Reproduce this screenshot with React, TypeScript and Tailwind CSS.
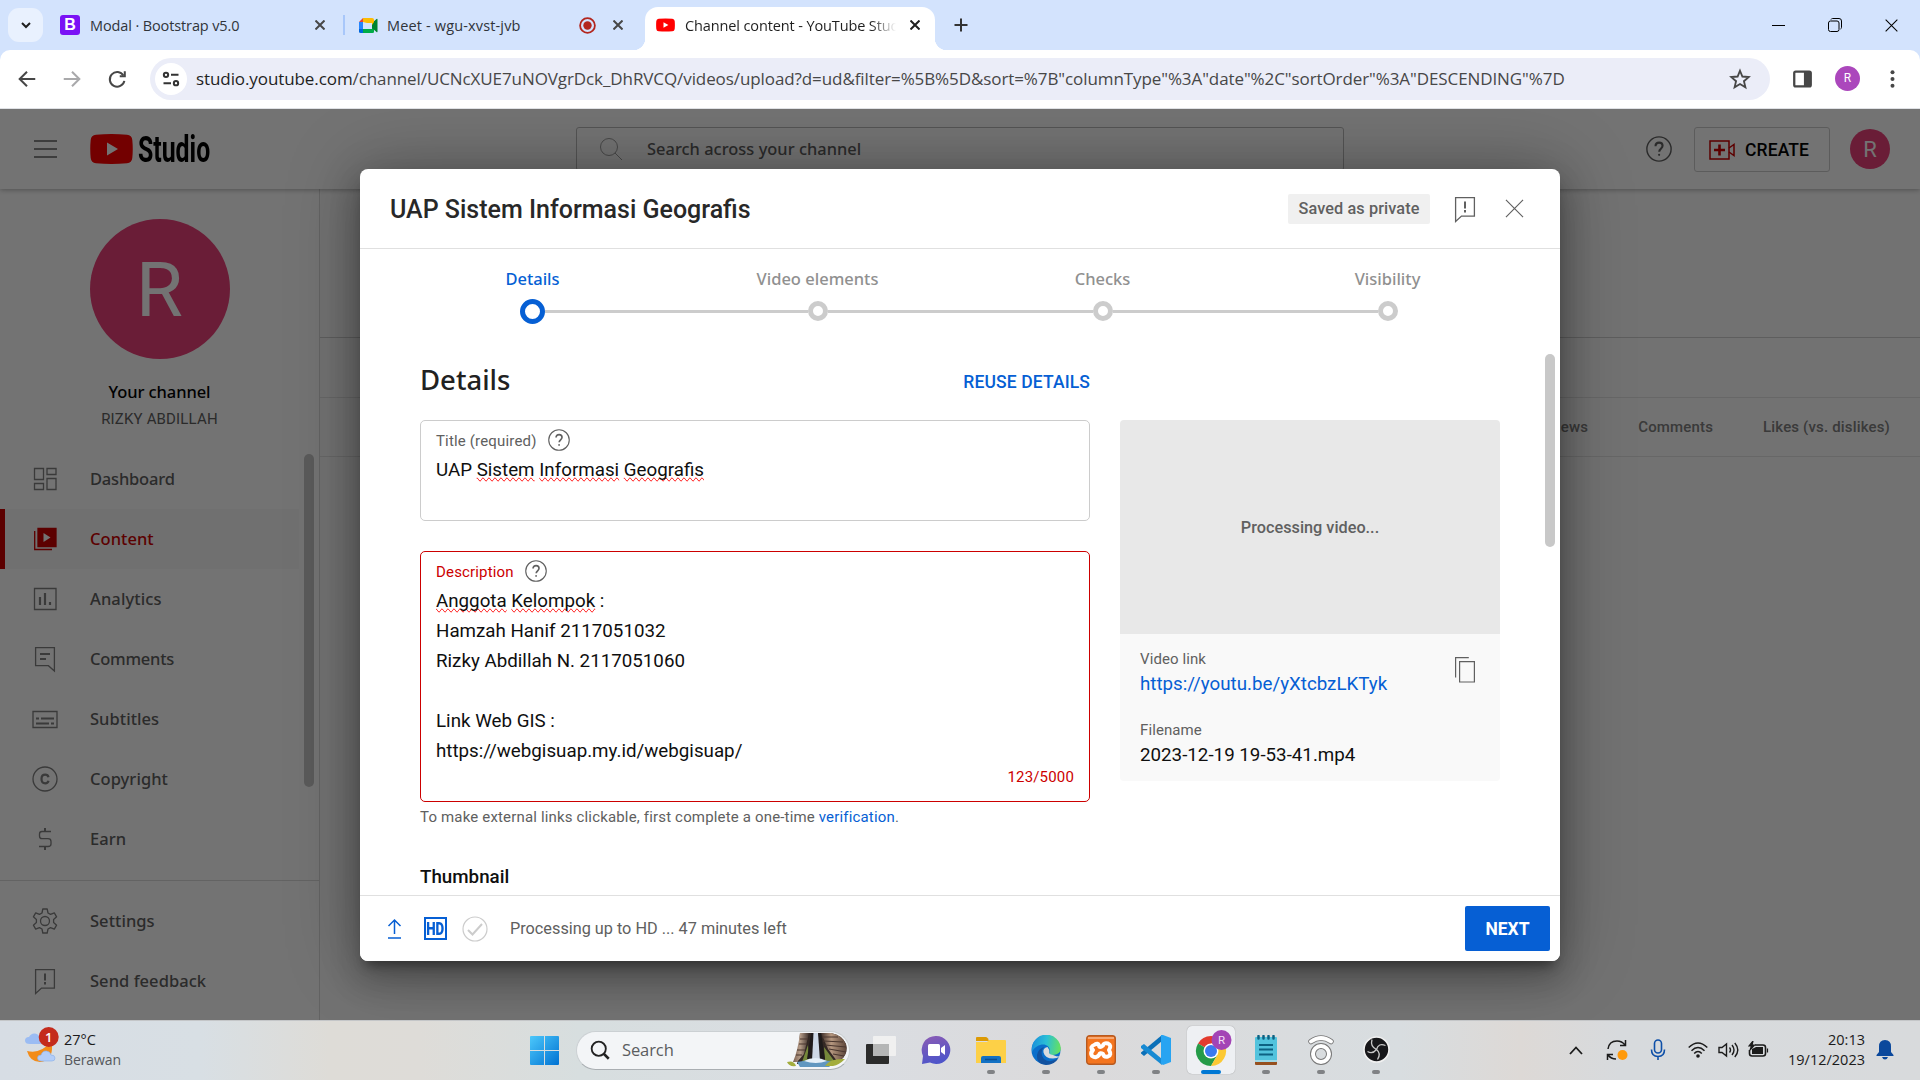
import React from "react";

const segoe = "font-['Open_Sans',sans-serif]";
const ytSans = "font-['Noto_Sans',sans-serif] font-medium";

type P = { className?: string; children?: React.ReactNode };

function Line({ size = 24, w = 1, className = "", children }: P & { size?: number; w?: number }) {
  return (
    <svg width={size} height={size} viewBox="0 0 24 24" fill="none" stroke="currentColor" strokeWidth={w} className={`shrink-0 ${className}`}>
      {children}
    </svg>
  );
}

const Cross = ({ size = 10, w = 2, className = "" }: { size?: number; w?: number; className?: string }) => (
  <svg width={size} height={size} viewBox="0 0 10 10" stroke="currentColor" strokeWidth={w} className={`shrink-0 ${className}`}>
    <path d="M.5.5l9 9M9.5.5l-9 9" />
  </svg>
);

const Help = ({ size, w = 1 }: { size: number; w?: number }) => (
  <Line size={size} w={w}>
    <circle cx="12" cy="12" r="11.2" />
    <path d="M8.8 9.4c0-2 1.3-3.3 3.3-3.3s3.200 1.200 3.200 3c0 2.600-3.100 2.800-3.100 5.400" strokeWidth={w * 1.5} />
    <circle cx="12.100" cy="17.400" r="1" fill="currentColor" stroke="none" />
  </Line>
);

const FeedbackIcon = () => (
  <svg width="30" height="30" viewBox="0 0 30 30" fill="none" stroke="currentColor" strokeWidth="1.3" className="shrink-0">
    <path d="M5.600 3.600h18.800v18.500H11.500L5.600 27.500z" />
    <path d="M15 7.500v7M15 16v2.500" strokeWidth="2" />
  </svg>
);

const YouTubeBadge = ({ w, h }: { w: number; h: number }) => (
  <svg width={w} height={h} viewBox="0 0 43 30" className="shrink-0">
    <path d="M6 .8Q21.500-.6 37 .8q4.800.4 5.300 5.200.9 9 0 18-.5 4.800-5.300 5.200-15.500 1.400-31 0Q1.200 28.800.7 24q-.9-9 0-18Q1.200 1.200 6 .8z" fill="#f00" />
    <path d="M17 8.600v12.800L28 15z" fill="#fff" />
  </svg>
);

function TabStrip() {
  return (
    <div className={`h-[50px] flex bg-[#d3e3fd] text-[#1f1f1f] text-[14.500px] ${segoe}`}>
      <div className="w-[35px] h-[34px] mt-2 ml-2 rounded-[11px] bg-[#e9f1fe] flex items-center justify-center">
        <svg width="10" height="7" viewBox="0 0 10 7" fill="none" stroke="#1f1f1f" strokeWidth="2"><path d="M1 1l4 4 4-4" /></svg>
      </div>
      <div className="ml-[17px] w-[283px] flex items-center">
        <div className="w-5 h-5 rounded-[3px] bg-[#7a12f5] text-white font-bold font-['Liberation_Sans',sans-serif] text-[16px] leading-5 text-center">B</div>
        <span className="ml-[10px] grow whitespace-nowrap tracking-[-0.120px] text-[#30343a] pt-px">Modal · Bootstrap v5.0</span>
        <Cross className="mr-[18px] text-[#474747]" />
      </div>
      <div className="w-[2px] h-5 mt-[15px] bg-[#a8c7fa]" />
      <div className="w-[300px] pl-[13px] flex items-center">
        <svg width="20" height="17" viewBox="0 0 20 17">
          <path d="M5 1h9v5h-5l-4-1z" fill="#fbbc04" />
          <path d="M1 5l4-4v4z" fill="#ea4335" />
          <path d="M1 5h4v7H1z" fill="#2684fc" />
          <path d="M1 12h4v4H2.500Q1 16 1 14.500z" fill="#0066da" />
          <path d="M5 12h9V9l2 2v4q0 1-1.500 1H5z" fill="#00ac47" />
          <path d="M14 6l4.500-4q1-.6 1 .5v12q0 1-1 .4l-4.500-4z" fill="#00832d" />
          <path d="M14 1q2 0 2 1.500V5l-2 3z" fill="#ffba00" />
        </svg>
        <span className="ml-[9px] grow whitespace-nowrap tracking-[0.150px] text-[#30343a] pt-px">Meet - wgu-xvst-jvb</span>
        <svg width="17" height="17" viewBox="0 0 17 17"><circle cx="8.500" cy="8.500" r="7.400" fill="none" stroke="#b3261e" strokeWidth="1.800" /><circle cx="8.500" cy="8.500" r="4.200" fill="#b3261e" /></svg>
        <Cross className="ml-[17px] mr-[22px] text-[#474747]" />
      </div>
      <div className="w-[290px] mt-[7px] rounded-t-[13px] bg-white pl-[11px] flex items-center pb-[7px] relative">
        <div className="absolute -left-3 bottom-0 w-3 h-3 bg-[radial-gradient(circle_at_0_0,transparent_12px,white_12.500px)]" />
        <div className="absolute -right-3 bottom-0 w-3 h-3 bg-[radial-gradient(circle_at_12px_0,transparent_12px,white_12.500px)]" />
        <YouTubeBadge w={19} h={14} />
        <span className="ml-[10px] w-[211px] overflow-hidden whitespace-nowrap tracking-[-0.120px] pt-px [mask-image:linear-gradient(to_right,black_88%,transparent)]">Channel content - YouTube Studio</span>
        <Cross className="ml-[14px]" />
      </div>
      <div className="ml-[19px] flex items-center grow">
        <svg width="14" height="14" viewBox="0 0 14 14" stroke="#333" strokeWidth="2"><path d="M7 .5v13M.5 7h13" /></svg>
      </div>
      <div className="flex items-center gap-[43px] pr-[22px]">
        <div className="w-[13px] h-px bg-black" />
        <svg width="14" height="14" viewBox="0 0 14 14" fill="none" stroke="#000"><rect x=".5" y="3" width="10.500" height="10.500" rx="2" /><path d="M3 1.500q.5-1 1.500-1H11q2.500 0 2.500 2.500v6.500q0 1-1 1.500" /></svg>
        <Cross size={13} w={0.8} className="text-black" />
      </div>
    </div>
  );
}

function AddressBar() {
  return (
    <div className="h-[59px] bg-[#d3e3fd]">
      <div className="h-full rounded-t-[10px] bg-white flex items-center pb-px border-b border-[#dfe1e5] text-[#474747]">
        <div className="w-[150px] pl-[16px] flex items-center gap-[23px] shrink-0">
          <Line size={22} w={2.200}><path d="M21 12H4.500M12 4l-8 8 8 8" /></Line>
          <Line size={22} w={2.200} className="text-[#a9a9ab]"><path d="M3 12h16.500M12 4l8 8-8 8" /></Line>
          <Line size={22} w={2.200}><path d="M19 8.200A8 8 0 1 0 20 14" /><path d="M20.500 3.500V9H15" /></Line>
        </div>
        <div className="w-[1620px] h-[42px] rounded-full bg-[#ebedf8] flex items-center pl-[5px] pr-[19px] shrink-0">
          <div className="w-8 h-8 rounded-full bg-white flex items-center justify-center">
            <Line size={20} w={2.400} className="text-[#333]"><circle cx="6" cy="7" r="2.600" /><path d="M12 7h9M3 17h9" /><circle cx="18" cy="17" r="2.600" /></Line>
          </div>
          <span className={`ml-[9px] grow text-[17px] pt-px whitespace-nowrap tracking-[-0.090px] text-[#474747] ${segoe}`}>
            <span className="text-[#1f1f1f]">studio.youtube.com</span>/channel/UCNcXUE7uNOVgrDck_DhRVCQ/videos/upload?d=ud&amp;filter=%5B%5D&amp;sort=%7B"columnType"%3A"date"%2C"sortOrder"%3A"DESCENDING"%7D
          </span>
          <Line size={22} w={2}><path d="M12 3l2.600 6.300 6.900.6-5.200 4.500 1.600 6.700-5.900-3.600-5.900 3.600 1.600-6.700L2.500 9.900l6.900-.6z" /></Line>
        </div>
        <svg width="19" height="18" viewBox="0 0 20 18" className="ml-[23px]"><rect x="1.300" y="1.300" width="17.400" height="15.400" rx="1.500" fill="none" stroke="#474747" strokeWidth="2.400" /><path d="M11.500 1h7v16h-7z" fill="#474747" /></svg>
        <div className="ml-[23px] w-[25px] h-[25px] rounded-full bg-[#ab47bc] text-white text-[12px] leading-[25px] text-center">R</div>
        <svg width="5" height="18" viewBox="0 0 5 18" fill="#474747" className="ml-[30px]"><circle cx="2.500" cy="2.200" r="2" /><circle cx="2.500" cy="9" r="2" /><circle cx="2.500" cy="15.800" r="2" /></svg>
      </div>
    </div>
  );
}

function StudioHeader() {
  return (
    <div className="h-20 shrink-0 flex items-start bg-white shadow-[0_1px_5px_rgba(0,0,0,.3)] relative text-[#606060]">
      <svg width="23" height="18" viewBox="0 0 23 18" stroke="currentColor" strokeWidth="1.300" className="ml-[34px] mt-[31px]"><path d="M0 1h23M0 9h23M0 17h23" /></svg>
      <div className="ml-[33px] mt-[25px]"><YouTubeBadge w={43} h={30} /></div>
      <div className="ml-[5px] w-[438px] mt-[20px] h-[42px]">
        <span className="inline-block origin-left scale-x-[0.690] text-[36px] leading-[42px] font-bold text-black">Studio</span>
      </div>
      <div className="w-[768px] h-[44px] mt-[18px] border border-[#bbb] rounded-[3px] flex items-center pl-[22px] text-[#a0a0a0]">
        <Line size={24}><circle cx="10" cy="10" r="8.500" /><path d="M16 16l7 7" /></Line>
        <span className={`ml-[24px] text-[16.400px] tracking-[0.030px] text-[#606060] ${ytSans}`}>Search across your channel</span>
      </div>
      <div className="ml-[302px] mt-[27px]"><Help size={26} w={1.300} /></div>
      <div className="ml-[22px] mt-[18px] w-[136px] h-[45px] border border-[#ccc] rounded-[3px] flex items-center pl-[14px]">
        <svg width="27" height="20" viewBox="0 0 27 20" fill="none" stroke="#c00" strokeWidth="1.500"><path d="M1 1h19v18H1z" /><path d="M20 8l5-3.500v11L20 12" /><path d="M10.500 4.500v11M5 10h11" strokeWidth="2.600" /></svg>
        <span className="ml-[9px] pt-[2px] text-[17.500px] tracking-[0.120px] font-medium text-[#030303]">CREATE</span>
      </div>
      <div className="ml-[20px] mt-[20px] w-10 h-10 rounded-full bg-[#ec407a] text-white text-[22px] leading-[41px] text-center">R</div>
    </div>
  );
}

const icons: Record<string, React.ReactNode> = {
  Dashboard: <g><path d="M4.500 4.500h9v11h-9zM17 4.500h9v6h-9zM4.500 19.500h9v6h-9zM17 14.500h9v11h-9z" /></g>,
  Content: <g stroke="#c00"><path d="M8 4.500h18v18H8z" fill="#c00" /><path d="M4.700 7v18.500H22" /><path d="M13.500 9v9l7-4.500z" fill="#fff" stroke="none" /></g>,
  Analytics: <g><path d="M4.500 4.500h21.500v21H4.500z" /><path d="M10 13v8M15 9v12M20 18v3" strokeWidth="2.200" /></g>,
  Comments: <g><path d="M5.600 3.600h18.800V27l-6-5.300H5.600z" /><path d="M10 10h10M10 15h6" strokeWidth="2" /></g>,
  Subtitles: <g><path d="M3 7.500h24v16H3z" /><path d="M6 14.500h3M11 14.500h13M6 19.500h13M21 19.500h3" strokeWidth="2" /></g>,
  Copyright: <g><circle cx="15" cy="15" r="12" /><path d="M18.500 13.200q-.5-2.500-3.300-2.500-3.700 0-3.700 4.300t3.700 4.300q2.800 0 3.300-2.600" strokeWidth="2.200" /></g>,
  Earn: <g><path d="M21 7.500h-9q-2.500 0-2.500 2.500v2q0 2.700 2.500 2.700h6q3 0 3 2.800v2.500q0 2.500-3 2.500H9" /><path d="M15 4v3.500M15 22.500V26" strokeWidth="2" /></g>,
  Settings: (
    <g>
      <circle cx="15" cy="15" r="4.500" />
      <path d="M12.800 3h4.400l.8 4 2.500 1.400 3.800-1.500 2.300 3.900-3 2.600v3.200l3 2.600-2.300 3.900-3.800-1.500-2.500 1.400-.8 4h-4.400l-.8-4-2.500-1.400-3.800 1.500-2.300-3.900 3-2.600v-3.200l-3-2.600 2.300-3.900 3.800 1.500L12 7z" strokeLinejoin="round" />
    </g>
  ),
  "Send feedback": <g><path d="M5.600 3.600h18.800v18.500H11.500L5.600 27.500z" /><path d="M15 7.500v7M15 16v2.500" strokeWidth="2" /></g>,
};

function NavItem({ name, active = false, tracking = "tracking-[0.050px]" }: { name: string; active?: boolean; tracking?: string }) {
  return (
    <div className={`h-[60px] flex items-center ${active ? "w-[299px] bg-[#f8f8f8] border-l-[5px] border-[#c00] pl-[25px] text-[#c00]" : "pl-[30px] text-[#606060]"}`}>
      <svg width="30" height="30" viewBox="0 0 30 30" fill="none" stroke="currentColor" strokeWidth="1.300" className="text-[#808080]">{icons[name]}</svg>
      <span className={`ml-[30px] text-[16.500px] ${tracking} ${ytSans}`}>{name}</span>
    </div>
  );
}

function Sidebar() {
  return (
    <div className="w-[320px] shrink-0 bg-white border-r border-[#dcdcdc] flex flex-col">
      <div className="h-[260px] pt-[30px] flex flex-col items-center">
        <div className="w-[140px] h-[140px] rounded-full bg-[#ec407a] text-white text-[76px] leading-[142px] text-center">R</div>
        <div className={`mt-[20px] text-[16.500px] leading-[26px] tracking-[-0.100px] text-[#030303] ${ytSans}`}>Your channel</div>
        <div className="mt-[4px] text-[15px] leading-[20px] tracking-[0.165px] text-[#606060]">RIZKY ABDILLAH</div>
      </div>
      <div className="flex h-[431px]">
        <div className="w-[304px]">
          <NavItem name="Dashboard" tracking="tracking-[-0.200px]" />
          <NavItem name="Content" active />
          <NavItem name="Analytics" tracking="tracking-[0.100px]" />
          <NavItem name="Comments" tracking="tracking-[-0.250px]" />
          <NavItem name="Subtitles" />
          <NavItem name="Copyright" />
          <NavItem name="Earn" />
        </div>
        <div className="mt-[5px] w-[10px] h-[333px] rounded-full bg-[#c8c8c8]" />
      </div>
      <div className="h-px bg-[#dcdcdc]" />
      <div className="mt-[10px]">
        <NavItem name="Settings" />
        <NavItem name="Send feedback" />
      </div>
    </div>
  );
}

function ContentTable() {
  return (
    <div className="grow bg-[#fdfdfd] pt-[148px] text-[15px] tracking-[0.165px] font-medium text-[#808080]">
      <div className="h-[60px] border-t border-[#d0d0d0]" />
      <div className="h-[60px] border-y border-[#e5e5e5] flex items-center justify-end gap-[50px] pr-[30px]">
        <span>Views</span>
        <span>Comments</span>
        <span>Likes (vs. dislikes)</span>
      </div>
    </div>
  );
}

const Sp = ({ children }: P) => <span className="[text-decoration-line:spelling-error]">{children}</span>;

function Stepper() {
  const steps = ["Details", "Video elements", "Checks", "Visibility"];
  return (
    <div className="h-[105px] shrink-0 px-[30px] pt-[17px] grid grid-cols-4">
      {steps.map((s, i) => (
        <div key={s} className="flex flex-col items-center">
          <div className={`h-[25px] leading-[25px] text-[16.500px] ${ytSans} ${i === 0 ? "text-[#065fd4]" : "text-[#909090]"}`}>{s}</div>
          <div className="mt-[7px] w-full h-[26px] flex items-center">
            <div className={`h-[3px] grow ${i === 0 ? "bg-transparent" : "bg-[#ccc]"}`} />
            {i === 0 ? (
              <div className="w-[25px] h-[25px] rounded-full border-[5px] border-[#065fd4]" />
            ) : (
              <div className="w-5 h-5 rounded-full border-[5px] border-[#ccc]" />
            )}
            <div className={`h-[3px] grow ${i === 3 ? "bg-transparent" : "bg-[#ccc]"}`} />
          </div>
        </div>
      ))}
    </div>
  );
}

function UploadDialog() {
  return (
    <div className="absolute left-[360px] top-[169px] w-[1200px] h-[792px] rounded-[8px] bg-white flex flex-col overflow-hidden text-[#0f0f0f]">
      <div className="h-20 shrink-0 border-b border-[#e0e0e0] flex items-center pl-[30px] pr-[36px] text-[#606060]">
        <span className="grow text-[25px] pt-[2px] font-medium text-[#282828]">UAP Sistem Informasi Geografis</span>
        <span className="w-[142px] h-[30px] bg-[#f0f0f0] rounded-[2px] text-center leading-[30px] text-[16.250px] tracking-[0.110px] font-medium">Saved as private</span>
        <div className="ml-[20px]"><FeedbackIcon /></div>
        <Cross size={19} w={0.6} className="ml-[25px]" />
      </div>
      <Stepper />
      <div className="h-[541px] flex overflow-hidden">
        <div className="ml-[60px] w-[670px]">
          <div className="h-[66px] pt-[8px] flex items-start justify-between">
            <span className={`text-[27.500px] leading-[40px] -mt-[2px] text-[#212121] ${ytSans}`}>Details</span>
            <span className="text-[17.500px] leading-[40px] tracking-[0.120px] font-medium text-[#065fd4]">REUSE DETAILS</span>
          </div>
          <div className="h-[101px] border border-[#ccc] rounded-[5px] px-[15px] pt-[6px]">
            <div className="h-[25px] flex items-center gap-[11px] text-[15px] tracking-[0.165px] text-[#606060]"><span className="pt-[3px]">Title (required)</span><Help size={22} w={1.200} /></div>
            <div className="mt-[3px] text-[18.750px] leading-[30px]">UAP <Sp>Sistem</Sp> <Sp>Informasi</Sp> <Sp>Geografis</Sp></div>
          </div>
          <div className="mt-[30px] h-[251px] border border-[#c00] rounded-[5px] px-[15px] pt-[6px]">
            <div className="h-[25px] flex items-center gap-[11px] text-[15px] tracking-[0.165px] text-[#c00]"><span className="pt-[3px]">Description</span><span className="text-[#606060]"><Help size={22} w={1.200} /></span></div>
            <div className="mt-[3px] text-[18.750px] leading-[30px] whitespace-pre-line h-[180px]">
              <Sp>Anggota</Sp> <Sp>Kelompok</Sp> :{"\nHamzah Hanif 2117051032\nRizky Abdillah N. 2117051060\n\nLink Web GIS :\nhttps://webgisuap.my.id/webgisuap/"}
            </div>
            <div className="text-right text-[15px] leading-[22px] tracking-[0.165px] text-[#c00]">123/5000</div>
          </div>
          <div className="mt-[4px] text-[15px] leading-[22px] tracking-[0.165px] text-[#606060]">To make external links clickable, first complete a one-time <span className="text-[#065fd4]">verification</span>.</div>
          <div className="mt-[34px] text-[18.750px] leading-[30px] font-medium">Thumbnail</div>
        </div>
        <div className="ml-[30px] mt-[66px] w-[380px]">
          <div className="h-[214px] rounded-t-[4px] bg-[#e8e8e8] flex items-center justify-center pt-[2px] text-[16.250px] font-medium text-[#606060]">Processing video...</div>
          <div className="h-[147px] rounded-b-[4px] bg-[#f9f9f9] flex pl-5 pr-[25px]">
            <div className="grow pt-[14px]">
              <div className="text-[15px] leading-[22px] tracking-[0.100px] text-[#606060]">Video link</div>
              <div className="text-[18.750px] leading-[28px] text-[#065fd4]">https://youtu.be/yXtcbzLKTyk</div>
              <div className="mt-[21px] text-[15px] leading-[22px] tracking-[0.100px] text-[#606060]">Filename</div>
              <div className="text-[18.750px] leading-[28px]">2023-12-19 19-53-41.mp4</div>
            </div>
            <svg width="20" height="26" viewBox="0 0 20 26" fill="none" stroke="#606060" strokeWidth="1.200" className="mt-[23px]"><path d="M.6 20.500V.6h13.200M4.600 4.600h14.800v20.400H4.600z" /></svg>
          </div>
        </div>
        <div className="ml-[45px] w-[10px] h-[193px] rounded-full bg-[#c8c8c8]" />
      </div>
      <div className="h-[66px] bg-white shrink-0 border-t border-[#e0e0e0] flex items-center pl-[27px] pr-[10px] relative">
        <svg width="16" height="22" viewBox="0 0 16 22" fill="none" stroke="#065fd4" strokeWidth="1.500"><path d="M7.500 16V2.500M1.500 8l6-6 6 6M1 20h13" /></svg>
        <div className="ml-[21px] w-[23px] h-[23px] border-2 border-[#065fd4] flex items-center justify-center">
          <span className="inline-block scale-x-[0.740] text-[18px] leading-none font-black pt-px text-[#065fd4]">HD</span>
        </div>
        <svg width="26" height="26" viewBox="0 0 26 26" fill="none" stroke="#ccc" className="ml-[15px]"><circle cx="13" cy="13" r="12" strokeWidth="1.200" /><path d="M6 14l4.500 4.500L20 8" strokeWidth="2" /></svg>
        <span className="ml-[22px] pt-[2px] grow text-[16.250px] text-[#606060]">Processing up to HD ... 47 minutes left</span>
        <div className="w-[85px] h-[45px] rounded-[2px] bg-[#065fd4] text-white text-center leading-[47px] text-[17.500px] font-bold">NEXT</div>
      </div>
    </div>
  );
}

function TaskIcon({ children, running = true, active = false }: P & { running?: boolean; active?: boolean }) {
  return (
    <div className="w-[55px] h-[58px] flex items-center justify-center relative">
      {active && <div className="absolute inset-x-[3.500px] top-[5px] bottom-[5px] rounded-[5px] bg-[#eef0f3] shadow-[0_0_1px_#888]" />}
      <div className="relative flex">{children}</div>
      {running && <div className={`absolute bottom-[5px] h-1 rounded-full ${active ? "w-5 bg-[#0078d4]" : "w-2 bg-[#808285]"}`} />}
    </div>
  );
}

function Taskbar() {
  return (
    <div className={`h-[60px] flex items-center pb-px border-t border-[#c4c6c8] text-[#1b1b1b] bg-[linear-gradient(90deg,#d7dde4_0px,#d8dfe4_200px,#dedcd7_330px,#dedcd8_420px,#d7dedf_580px,#dadde2_850px,#dbdadb_1080px,#d8dde0_1400px,#ddd9d6_1520px,#d7dadd_1620px,#d8dadc_1920px)] ${segoe}`}>
      <div className="w-[530px] pl-[24px] flex items-center shrink-0">
        <svg width="36" height="38" viewBox="0 0 36 38" className="-mt-[10px]">
          <path d="M3 25q14 3 22-8l3 2q1 16-12 17-10 0-13-11z" fill="#f28c1a" />
          <path d="M6 18q-5 0-5-3.500T5 11q2-4 6-3.500t5 4.500q3 0 3 3t-3 3z" fill="#9bbcf3" />
          <path d="M17 35q-3.500 0-3.500-3t3.500-3q1.500-4.500 5.500-4T27 29q4 0 4 3t-3 3z" fill="#b3cdf8" stroke="#87aeea" strokeWidth=".6" />
          <circle cx="24.700" cy="11" r="10" fill="#c42b1c" />
          <text x="24.700" y="15.500" fill="#fff" fontSize="13" fontWeight="600" textAnchor="middle">1</text>
        </svg>
        <div className="ml-1 leading-[20px]">
          <div className="text-[14.500px]">27°C</div>
          <div className="text-[14px] tracking-[-0.100px] text-[#55585c]">Berawan</div>
        </div>
      </div>
      <svg width="29" height="29" viewBox="0 0 29 29">
        <defs><linearGradient id="win" x1="0" y1="0" x2="1" y2="1"><stop offset="0" stopColor="#4cc8fb" /><stop offset="1" stopColor="#0072d2" /></linearGradient></defs>
        <path d="M1 0h13v14H0V1Q0 0 1 0zM15 0h13q1 0 1 1v13H15zM0 15h14v14H1q-1 0-1-1zM15 15h14v13q0 1-1 1H15z" fill="url(#win)" />
      </svg>
      <div className="ml-[17px] w-[274px] h-[39px] rounded-full bg-[#f3f5f7] border border-[#cbd0d3] border-b-[#a9aeb2] flex items-center pl-[13px] overflow-hidden">
        <Line size={20} w={2.200} className="text-[#222]"><circle cx="10.500" cy="10.500" r="8.500" /><path d="M16.500 16.500l6 6" strokeWidth="3" /></Line>
        <span className="ml-[12px] w-[165px] text-[16.500px] tracking-[-0.100px] text-[#5b5d60]">Search</span>
        <svg width="61" height="34" viewBox="0 0 61 34">
          <defs>
            <linearGradient id="rockL" x1="0" y1="0" x2="1" y2="0"><stop offset="0" stopColor="#7b6152" /><stop offset=".45" stopColor="#b59c88" /><stop offset="1" stopColor="#3d302b" /></linearGradient>
            <linearGradient id="rockR" x1="0" y1="0" x2="1" y2="0"><stop offset="0" stopColor="#3d2f2a" /><stop offset=".4" stopColor="#b5977f" /><stop offset="1" stopColor="#5b4438" /></linearGradient>
          </defs>
          <path d="M13 0h31q11 2 15 11 2 8-3 14l-8 6H10Q12 12 13 0z" fill="#332824" />
          <path d="M13 0h9l-5 21-7 8H6q5-12 7-29z" fill="url(#rockL)" />
          <path d="M34 0h10q11 2 15 11 2 8-3 14l-6 3-9-12z" fill="url(#rockR)" />
          <path d="M35 4l16 0M36 8l20 1M38 12l21 2M42 16l17 3M46 21l11 2M13 6h8M12 11h8M10 17h8M9 22h6" stroke="#4a372f" strokeWidth="1.100" />
          <path d="M21 12l-6 17h7zM37 14l11 15H38z" fill="#75883a" />
          <path d="M24 0h10l4 26H20z" fill="#1f1b1b" />
          <path d="M26.500 0h4.500l2 28h-8z" fill="#cdd8e6" />
          <path d="M10 29q18-4 38 0l-6 5H13z" fill="#6197c0" />
          <path d="M17 28q11-6 23 0-11 4-23 0z" fill="#e4eff8" />
          <path d="M0 29q7-2 9 4-7 1-9-4zM38 33q5-8 20-7-6 6-12 7z" fill="#a3ad3d" />
        </svg>
      </div>
      <div className="ml-[3.500px] flex items-center">
        <TaskIcon running={false}>
          <svg width="30" height="28" viewBox="0 0 30 28"><rect x="0" y="8" width="23" height="20" rx="1" fill="#2c2c2b" /><rect x="7" y="0" width="23" height="20" rx="1" fill="#f0f0f0" /><path d="M7 8h16v12H7z" fill="#b5b6b6" /></svg>
        </TaskIcon>
        <TaskIcon running={false}>
          <svg width="30" height="30" viewBox="0 0 30 30"><defs><linearGradient id="chat" x1="0" y1="0" x2="0.300" y2="1"><stop offset="0" stopColor="#8d5cb4" /><stop offset="1" stopColor="#4f55c9" /></linearGradient></defs><path d="M15 1a14 14 0 1 1-6 26.500L1 29l1-8A14 14 0 0 1 15 1z" fill="url(#chat)" /><rect x="7" y="9" width="12" height="12" rx="1.500" fill="#fff" /><path d="M20 13l4-3v10l-4-3z" fill="#fff" /></svg>
        </TaskIcon>
        <TaskIcon>
          <svg width="30" height="28" viewBox="0 0 30 28"><path d="M0 2q0-1 1-1h9q1 0 2 1.500L13 5H0z" fill="#dc9a05" /><path d="M0 6h11l2-2h16q1 0 1 1v22H0z" fill="#fdd047" /><path d="M5 27v-5q0-2 2-2h16q2 0 2 2v5z" fill="#1371c4" /><path d="M9 23.500h12" stroke="#0b4d91" strokeWidth="1.500" /></svg>
        </TaskIcon>
        <TaskIcon>
          <svg width="30" height="30" viewBox="0 0 30 30">
            <defs><linearGradient id="edge" x1="0" y1=".3" x2="1" y2=".4"><stop offset="0" stopColor="#1a8fdc" /><stop offset=".5" stopColor="#2bbfd6" /><stop offset="1" stopColor="#65e160" /></linearGradient></defs>
            <circle cx="15" cy="15" r="14.500" fill="#0b6fcb" />
            <path d="M1 12A14.500 14.500 0 0 1 29.800 13c.2 5-4 7-8 7-3 0-4-1-3.500-2 2-5-2-8.500-6-8.500S3 12 1 17z" fill="url(#edge)" />
            <path d="M13 12q-5 6 0 12 6 5 14.500-1-4 7-12.500 7-10-1-9-10 1-6 7-8z" fill="#1252a0" />
            <path d="M16.500 12q-5 1-4 5.500 1.500 6 9.500 6 4 0 6.500-2-3 0-6.500-1.500-5-1-3.700-3 .5-2-1.800-5z" fill="#d9dbde" />
          </svg>
        </TaskIcon>
        <TaskIcon>
          <svg width="30" height="30" viewBox="0 0 30 30"><rect x=".7" y=".7" width="28.600" height="28.600" rx="3" fill="#f4751f" stroke="#b85a20" strokeWidth="1.400" /><path d="M2 3h26" stroke="#f7a873" strokeWidth="2" /><path d="M9 9.500q3-2 4 1 .5 3 4 0 .5-3 5-2 4 2 1 6.500 3 5-1 6.500-4 1-5-2.500-3-2-4 1-3 4-7 1-2-3 1-6-4-3 2-5.500z" fill="none" stroke="#fff" strokeWidth="4" strokeLinejoin="round" /></svg>
        </TaskIcon>
        <TaskIcon>
          <svg width="30" height="30" viewBox="0 0 30 30"><path d="M21 6L3 21l-3-2.500v-1L21 0z" fill="#0b70b8" /><path d="M21 24L3 9 0 11v2l21 17z" fill="#178ad3" /><path d="M20 0l2 0 8 3v24l-8 3-2-1.500z" fill="#27a4f2" /></svg>
        </TaskIcon>
        <TaskIcon active>
          <svg width="38" height="38" viewBox="0 0 38 38" className="ml-[3px] -mt-[7px]">
            <path d="M17 23L4 15.500A15 15 0 0 1 30 15.500H17z" fill="#e33b2e" />
            <path d="M17 23l6.500 3.800L17 38A15 15 0 0 1 4 15.500z" fill="#259b48" />
            <path d="M17 15.500h13A15 15 0 0 1 17 38l6.500-11.200z" fill="#fcc934" />
            <circle cx="17" cy="23" r="7.500" fill="#fff" /><circle cx="17" cy="23" r="6" fill="#3a7af0" />
            <circle cx="27.500" cy="12" r="10" fill="#a344b5" />
            <text x="27.500" y="16" textAnchor="middle" fill="#f3dff6" fontSize="11.500" fontFamily="Roboto">R</text>
          </svg>
        </TaskIcon>
        <TaskIcon>
          <svg width="22" height="30" viewBox="0 0 22 30"><rect y="26" width="22" height="4" rx="1" fill="#96501f" /><rect y="2" width="22" height="25" rx="1" fill="#52c3dd" /><path d="M0 26h22" stroke="#eee" /><path d="M4 10h14M4 14.500h14M4 19.500h14" stroke="#0d6283" strokeWidth="2" /><path d="M3.500 1v2.500M8.500 1v2.500M13.500 1v2.500M18.500 1v2.500" stroke="#0d6283" strokeWidth="2.500" strokeLinecap="round" /></svg>
        </TaskIcon>
        <TaskIcon>
          <svg width="26" height="30" viewBox="0 0 26 30" fill="none"><circle cx="13" cy="19" r="8" stroke="#777" strokeWidth="6" /><circle cx="13" cy="19" r="8" stroke="#fff" strokeWidth="4" /><path d="M3 6.500q10-7 20 0" stroke="#777" strokeWidth="5.500" strokeLinecap="round" /><path d="M3 6.500q10-7 20 0" stroke="#fff" strokeWidth="3.800" strokeLinecap="round" /></svg>
        </TaskIcon>
        <TaskIcon>
          <svg width="27" height="27" viewBox="0 0 27 27" fill="none" stroke="#c8c8c8" strokeWidth="1.300" className="-mt-px"><circle cx="13.500" cy="13.500" r="12.500" fill="#17171a" stroke="#f1f1f1" strokeWidth="1.600" /><path d="M9 3.500q-2 7 4.500 10M13.500 13.500q2-7 9-4M13.500 13.500q5 4 1 10M13.500 13.500q-4 5-9 2" /></svg>
        </TaskIcon>
      </div>
      <div className="grow" />
      <div className="flex items-center shrink-0 pr-[26px]">
        <svg width="14" height="9" viewBox="0 0 14 9" fill="none" stroke="#1b1b1b" strokeWidth="1.800"><path d="M1 8l6-6.500L13 8" /></svg>
        <svg width="22" height="22" viewBox="0 0 22 22" fill="none" stroke="#1b1b1b" strokeWidth="1.500" className="ml-[23px]"><path d="M2 10Q3 2 11 2q5 0 8 4M19.500 1v5.500H14M10 20q-5 0-8-4M1.500 21v-5.500H7" /><circle cx="16.500" cy="16" r="5" fill="#ff9a0c" stroke="none" /></svg>
        <svg width="16" height="22" viewBox="0 0 16 22" fill="none" stroke="#0d4fa8" strokeWidth="1.600" className="ml-[22px]"><rect x="4.500" y="1" width="7" height="13" rx="3.500" /><path d="M1.500 10.500q0 7 6.500 7t6.500-7M8 17.500V21" /></svg>
        <svg width="20" height="16" viewBox="0 0 20 16" fill="none" stroke="#1b1b1b" strokeWidth="1.500" className="ml-[22px]"><path d="M.7 5.500q9.300-9 18.600 0M3.500 8.700q6.500-6.500 13 0M6.200 11.500q3.800-3.800 7.600 0" /><circle cx="10" cy="14" r="1.800" fill="#1b1b1b" stroke="none" /></svg>
        <svg width="21" height="16" viewBox="0 0 21 16" fill="none" stroke="#1b1b1b" strokeWidth="1.400" className="ml-[10px]"><path d="M1 5.500h3L8.500 2v12L4 10.500H1zM11.500 5.500q2 2.500 0 5M14 3q4 5 0 10M16.800 1q6 7 0 14" /></svg>
        <svg width="21" height="17" viewBox="0 0 21 17" fill="none" stroke="#1b1b1b" strokeWidth="1.600" className="ml-[9px] -mt-[2px]"><path d="M7 4h8q2.500 0 2.500 2.500v6Q17.500 15 15 15H4q-2.500 0-2.500-2.500V9" /><path d="M4 8l4-2h7v7H4z" fill="#1b1b1b" stroke="none" /><path d="M19.500 7.500v4M5 0L1 5h2.500L2 9l4.500-5H4z" fill="#1b1b1b" strokeWidth="1.200" /></svg>
        <div className="w-[96px] text-right text-[14.500px] leading-[20px] -mt-px">
          <div>20:13</div>
          <div>19/12/2023</div>
        </div>
        <svg width="18" height="20" viewBox="0 0 18 20" fill="#0b489c" className="ml-[11px]"><path d="M9 0q6 0 6 6.500V12l2.500 3q.5 1-.5 1H1q-1 0-.5-1L3 12V6.500Q3 0 9 0zM6 17h6q-1 2.500-3 2.500T6 17z" /></svg>
      </div>
    </div>
  );
}

export default function App() {
  return (
    <div className="w-[1920px] h-[1080px] overflow-hidden relative bg-white font-['Roboto',sans-serif]">
      <TabStrip />
      <AddressBar />
      <div className="h-[911px] relative overflow-hidden flex flex-col">
        <StudioHeader />
        <div className="flex h-[831px]">
          <Sidebar />
          <ContentTable />
        </div>
        <div className="absolute inset-0 bg-black/55" />
        <div className="absolute left-[360px] top-[60px] w-[1200px] h-[792px] rounded-[8px] shadow-[0_20px_30px_3px_rgba(0,0,0,.14),0_8px_38px_6px_rgba(0,0,0,.12),0_10px_12px_-6px_rgba(0,0,0,.4),0_0_75px_rgba(0,0,0,.25)]" />
      </div>
      <Taskbar />
      <UploadDialog />
    </div>
  );
}
